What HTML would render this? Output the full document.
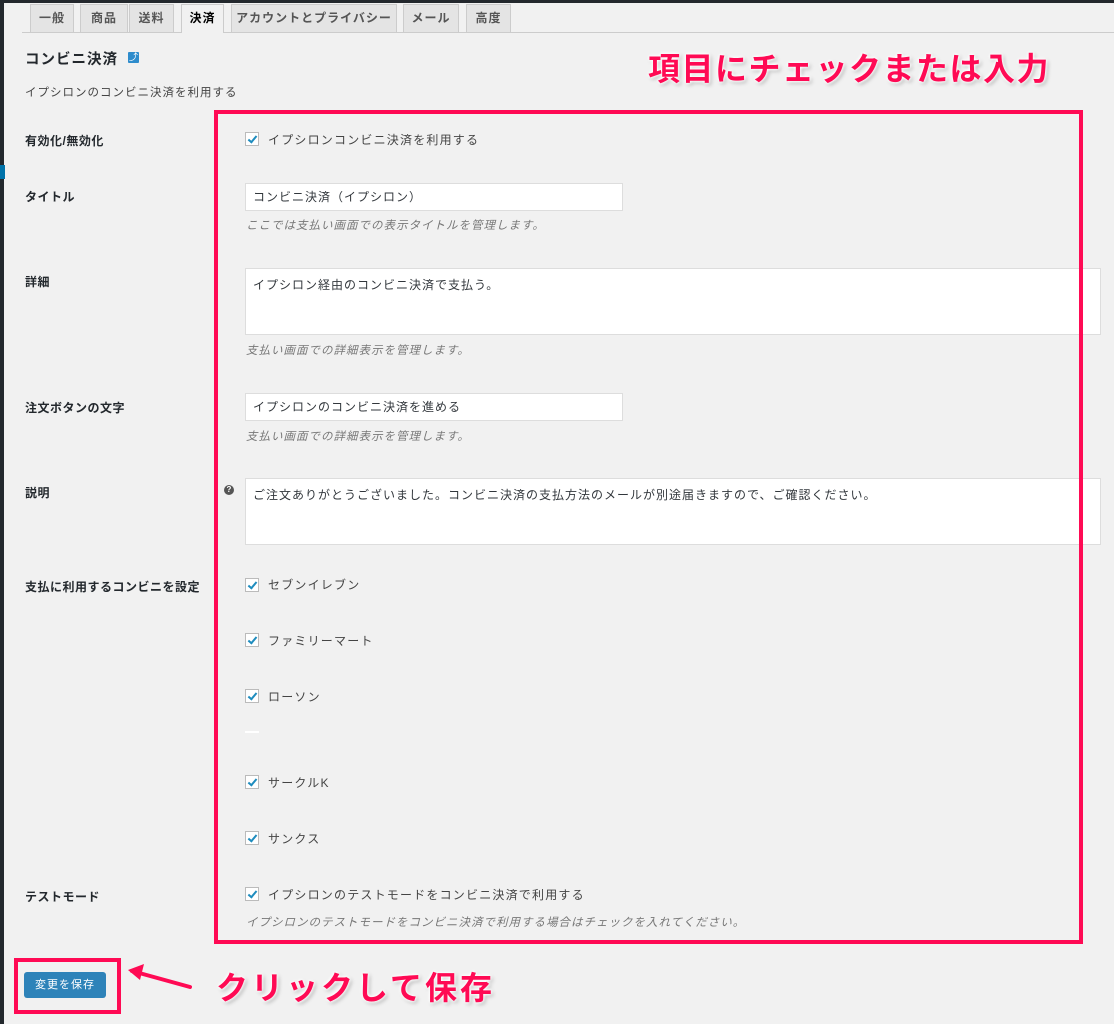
<!DOCTYPE html>
<html><head><meta charset="utf-8"><style>
body{margin:0;width:1114px;height:1024px;background:#f1f1f1;position:relative;overflow:hidden;font-family:"Liberation Sans","Noto Sans CJK JP",sans-serif;color:#23282d;font-size:12px;letter-spacing:1px}
.a{position:absolute}
.tab{position:absolute;top:4px;height:28px;background:#e4e4e4;border:1px solid #ccc;border-bottom:none;font-size:12px;font-weight:bold;color:#555;text-align:center;line-height:26px;box-sizing:border-box}
.lbl{position:absolute;left:25px;font-weight:bold;font-size:12px;color:#23282d;letter-spacing:0.5px}
.inp{position:absolute;left:245px;background:#fff;border:1px solid #ddd;box-sizing:border-box;font-size:12px;padding:0 7px;color:#32373c}
.cb{position:absolute;left:245px;width:14px;height:14px;border:1px solid #bbb;background:#fff;box-sizing:border-box}
.cb:after{content:"";position:absolute;left:4px;top:1px;width:3px;height:7px;border:solid #1e8cbe;border-width:0 2px 2px 0;transform:rotate(40deg)}
.ct{position:absolute;left:268px;font-size:12px;color:#444;letter-spacing:1.2px}
.desc{position:absolute;left:246px;font-size:11.5px;font-style:italic;color:#777;letter-spacing:1px}
.ann{position:absolute;font-weight:bold;color:#ff0a54;font-size:32px;letter-spacing:1.5px;text-shadow:0 0 3px #fff,0 0 3px #fff,0 0 4px #fff,2px 2px 4px rgba(0,0,0,.3)}
</style></head><body>
<div class="a" style="left:0;top:0;width:1114px;height:3px;background:#23282d"></div>
<div class="a" style="left:0;top:0;width:4px;height:1024px;background:#23282d"></div>
<div class="a" style="left:0;top:165px;width:5px;height:14px;background:#0073aa"></div>
<div class="a" style="left:22px;top:32px;width:1092px;height:1px;background:#ccc"></div>
<div class="tab" style="left:30px;width:44px">一般</div>
<div class="tab" style="left:80px;width:48px">商品</div>
<div class="tab" style="left:129px;width:45px">送料</div>
<div class="tab" style="left:181px;width:43px;background:#f1f1f1;color:#000;height:29px">決済</div>
<div class="tab" style="left:231px;width:166px">アカウントとプライバシー</div>
<div class="tab" style="left:403px;width:56px">メール</div>
<div class="tab" style="left:466px;width:45px">高度</div>
<div class="a" style="left:25px;top:48px;font-size:14.5px;font-weight:bold">コンビニ決済</div>
<div class="a" style="left:128px;top:52px;width:11px;height:11px;background:#2e8ccc;border-radius:1px;color:#fff;font-size:9px;line-height:11px;text-align:center;letter-spacing:0">⤴</div>
<div class="a" style="left:25px;top:84px;font-size:11.5px;color:#444">イプシロンのコンビニ決済を利用する</div>
<div class="lbl" style="top:132px">有効化/無効化</div>
<div class="cb" style="top:132px"></div><div class="ct" style="top:131px">イプシロンコンビニ決済を利用する</div>
<div class="lbl" style="top:188px">タイトル</div>
<div class="inp" style="top:183px;width:378px;height:28px;line-height:26px">コンビニ決済（イプシロン）</div>
<div class="desc" style="top:217px">ここでは支払い画面での表示タイトルを管理します。</div>
<div class="lbl" style="top:273px">詳細</div>
<div class="inp" style="top:268px;width:856px;height:67px;padding-top:7px">イプシロン経由のコンビニ決済で支払う。</div>
<div class="desc" style="top:342px">支払い画面での詳細表示を管理します。</div>
<div class="lbl" style="top:399px">注文ボタンの文字</div>
<div class="inp" style="top:393px;width:378px;height:28px;line-height:26px">イプシロンのコンビニ決済を進める</div>
<div class="desc" style="top:428px">支払い画面での詳細表示を管理します。</div>
<div class="lbl" style="top:484px">説明</div>
<div class="a" style="left:224px;top:485px;width:10px;height:10px;border-radius:50%;background:#555;color:#fff;font-size:8px;line-height:10px;text-align:center;font-weight:bold;letter-spacing:0">?</div>
<div class="inp" style="top:478px;width:856px;height:67px;padding-top:7px">ご注文ありがとうございました。コンビニ決済の支払方法のメールが別途届きますので、ご確認ください。</div>
<div class="lbl" style="top:578px">支払に利用するコンビニを設定</div>
<div class="cb" style="top:578px"></div><div class="ct" style="top:576px">セブンイレブン</div>
<div class="cb" style="top:633px"></div><div class="ct" style="top:632px">ファミリーマート</div>
<div class="cb" style="top:689px"></div><div class="ct" style="top:688px">ローソン</div>
<div class="a" style="left:245px;top:731px;width:14px;height:2px;background:#fff"></div>
<div class="cb" style="top:775px"></div><div class="ct" style="top:774px">サークルK</div>
<div class="cb" style="top:831px"></div><div class="ct" style="top:830px">サンクス</div>
<div class="lbl" style="top:888px">テストモード</div>
<div class="cb" style="top:887px"></div><div class="ct" style="top:886px">イプシロンのテストモードをコンビニ決済で利用する</div>
<div class="desc" style="top:914px">イプシロンのテストモードをコンビニ決済で利用する場合はチェックを入れてください。</div>
<div class="a" style="left:24px;top:972px;width:82px;height:26px;background:#2e83b9;border-radius:3px;color:#fff;font-size:11px;line-height:26px;text-align:center">変更を保存</div>
<div class="a" style="left:214px;top:110px;width:869px;height:834px;border:4px solid #ff0a54;box-sizing:border-box"></div>
<div class="a" style="left:14px;top:958px;width:107px;height:56px;border:4px solid #ff0a54;box-sizing:border-box"></div>
<div class="ann" style="left:648px;top:44px">項目にチェックまたは入力</div>
<div class="ann" style="left:216px;top:963px;letter-spacing:3px">クリックして保存</div>
<svg class="a" style="left:118px;top:960px" width="80" height="40"><line x1="72" y1="27" x2="14" y2="11" stroke="#ff0a54" stroke-width="4" stroke-linecap="round"/><path d="M10 10 L26 4 L22 20 Z" fill="#ff0a54"/></svg>
</body></html>
